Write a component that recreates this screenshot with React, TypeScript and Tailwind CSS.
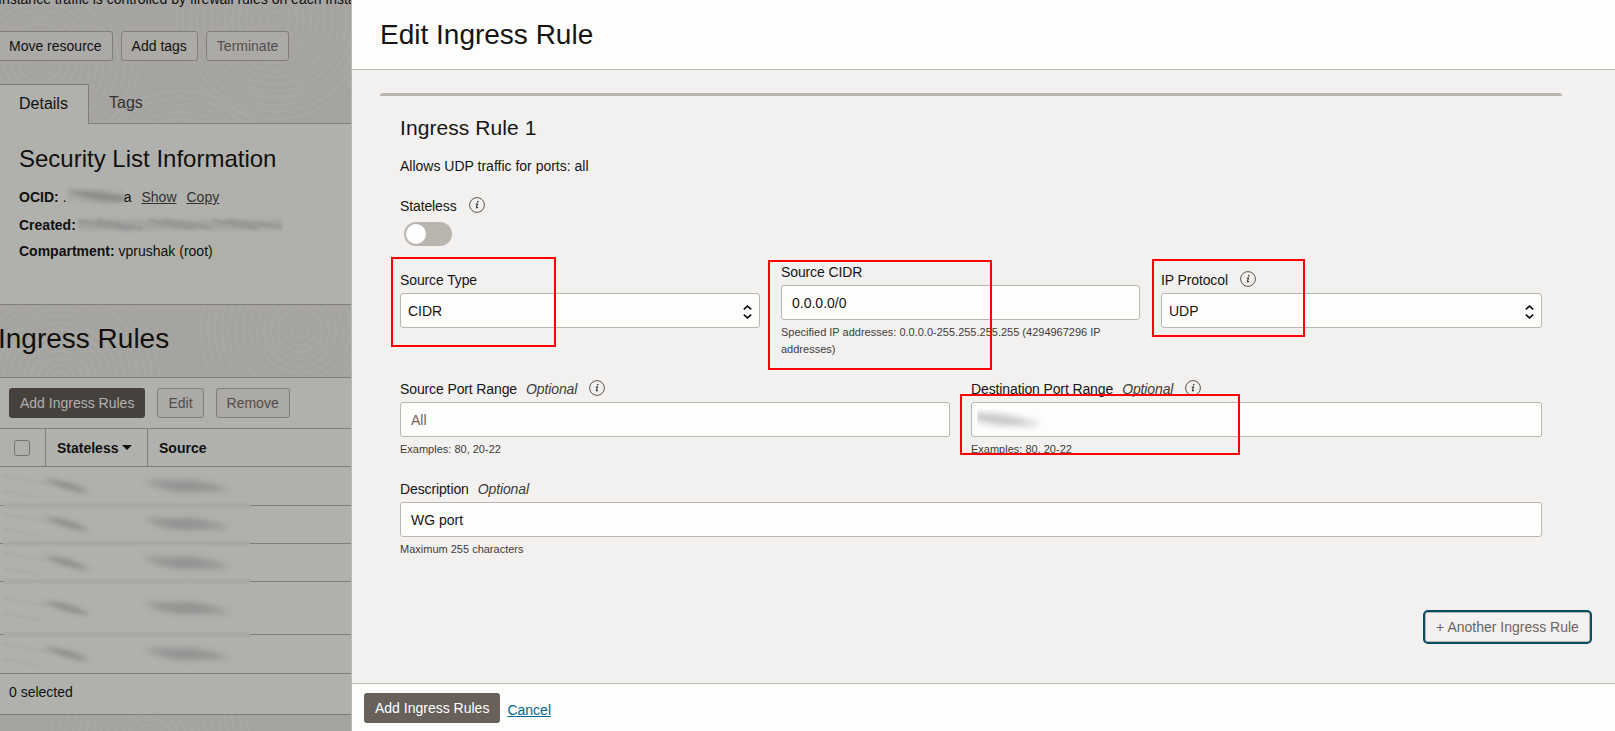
import React from "react";

const ROWS = [
  { height: "h-[39px]", smudge: "top-[-1px]" },
  { height: "h-[38px]", smudge: "top-[-2px]" },
  { height: "h-[38px]", smudge: "top-[-1px]" },
  { height: "h-[53px]", smudge: "top-[6px]" },
  { height: "h-[39px]", smudge: "top-[-1px]" },
];

function Rings() {
  const centers = [
    [40, 60],
    [180, 190],
    [275, 20],
    [300, 330],
    [60, 380],
    [150, 740],
  ];
  return (
    <svg className="absolute inset-0 h-full w-full" viewBox="0 0 351 731" fill="none" stroke="#acaba8">
      {centers.map(([cx, cy]) =>
        [8, 15, 22, 29, 36, 43, 50, 57, 64, 71, 78, 85, 92, 99].map((r) => (
          <circle key={`${cx}-${r}`} cx={cx} cy={cy} r={r} strokeWidth="2" opacity="0.5" />
        )),
      )}
    </svg>
  );
}

function InfoIcon({ className = "" }: { className?: string }) {
  return (
    <svg className={`h-4 w-4 shrink-0 ${className}`} viewBox="0 0 16 16" fill="none">
      <circle cx="8" cy="8" r="7.4" stroke="#4a4641" strokeWidth="0.9" />
      <circle cx="8.8" cy="4.7" r="0.8" fill="#161513" />
      <path d="M6.7 7.2L8.5 6.8L7.4 10.6C7.2 11.3 7.8 11.3 9 10.3" stroke="#161513" strokeWidth="1" />
    </svg>
  );
}

function UpDown() {
  return (
    <svg className="mt-[2px] h-[14px] w-[9px]" viewBox="0 0 9 14" fill="none" stroke="#161513" strokeWidth="1.7">
      <path d="M0.8 4.4L4.5 1.1L8.2 4.4M0.8 9.6L4.5 12.9L8.2 9.6" />
    </svg>
  );
}

function Field({ children, className = "" }: { children?: React.ReactNode; className?: string }) {
  return (
    <div
      className={`flex h-[35px] w-full items-center rounded-[3px] border border-[#bbb6b1] bg-[#fdfdfc] px-[10px] ${className}`}
    >
      {children}
    </div>
  );
}

function SelectField({ value }: { value: string }) {
  return (
    <Field className="justify-between pr-[7px] pl-[7px]">
      <span>{value}</span>
      <UpDown />
    </Field>
  );
}

function Label({ text, optional, info }: { text: string; optional?: boolean; info?: boolean }) {
  return (
    <div className="flex h-5 items-center tracking-[-0.12px] whitespace-nowrap">
      <span>{text}</span>
      {optional && <span className="ml-[9px] text-[#3f3b37] italic">Optional</span>}
      {info && <InfoIcon className="-mt-[3px] ml-[12px]" />}
    </div>
  );
}

function DarkRowSmudge({ className }: { className: string }) {
  return (
    <svg className={`absolute left-[3px] h-[39px] w-[247px] ${className}`} viewBox="0 0 247 39">
      <g fill="none" stroke="#a3a3a0" strokeWidth="2" opacity="0.6" style={{ filter: "blur(1px)" }}>
        <path d="M0 10L45 18M0 25L38 32" />
      </g>
      <path d="M40 13Q64 13 88 27Q64 26 40 13Z" fill="#8b8b89" style={{ filter: "blur(2.5px)" }} />
      <path d="M140 14Q160 16 184 14Q208 16 228 25Q204 24 184 26Q158 25 140 14Z" fill="#919190" style={{ filter: "blur(3px)" }} />
    </svg>
  );
}

function Sidebar() {
  const ghost = "h-[30px] rounded-[3px] border border-[#827d79] bg-[#acaaa7] px-[10px] whitespace-nowrap";
  return (
    <aside className="relative h-full w-[351px] shrink-0 overflow-hidden bg-[#a5a4a1] text-[#11100f]">
      <Rings />
      <div className="relative flex h-full flex-col">
        <div className="-mt-[11px] ml-[-2px] h-[42px] whitespace-nowrap leading-5">
          Instance traffic is controlled by firewall rules on each Instance
        </div>
        <div className="-ml-[2px] flex h-[53px] gap-2">
          <button className={ghost}>Move resource</button>
          <button className={ghost}>Add tags</button>
          <button className={`${ghost} text-[#514d4a]`}>Terminate</button>
        </div>
        <div className="flex h-10 shrink-0 text-base">
          <div className="h-10 w-[89px] border-t border-r border-[#827d79] bg-[#b0b0ad] pt-[7px] pl-[19px]">Details</div>
          <div className="flex-1 border-b border-[#827d79] pt-[7px] pl-5 text-[#34312e]">Tags</div>
        </div>
        <section className="h-[181px] shrink-0 border-b border-[#827d79] bg-[#b0b0ad] pl-[19px]">
          <h2 className="pt-[19px] text-[24px] leading-[32px]">Security List Information</h2>
          <div className="mt-[12px] flex h-5 leading-5">
            <b>OCID:</b>
            <span className="ml-1 w-[3px]">.</span>
            <svg className="h-5 w-[59px] shrink-0" viewBox="0 0 59 20">
              <rect y="2" width="59" height="14" fill="#a8a8a5" opacity="0.5" style={{ filter: "blur(2px)" }} />
              <path d="M0 4Q30 3 59 9L59 14Q40 16 24 12Q10 8 0 4Z" fill="#8c8c89" style={{ filter: "blur(2px)" }} />
              <path d="M2 10L42 17" stroke="#a0a09d" style={{ filter: "blur(.8px)" }} />
            </svg>
            <span className="-ml-px">a</span>
            <a className="ml-[10px] text-[#34312e] underline">Show</a>
            <a className="ml-[10px] text-[#34312e] underline">Copy</a>
          </div>
          <div className="mt-2 flex h-5 leading-5">
            <b>Created:</b>
            <svg className="ml-[1px] h-5 w-[206px]" viewBox="0 0 206 20">
              <path d="M0 4L206 5L206 15L0 15Z" fill="#a0a09d" opacity="0.8" style={{ filter: "blur(2px)" }} />
              <g stroke="#8f8f8f" strokeWidth="2.5" fill="none" opacity="0.8" style={{ filter: "blur(1.6px)" }}>
                <path d="M2 6Q26 10 54 15M20 5L66 14M72 5Q94 10 118 14M86 5L134 13M136 5L182 14M150 5L204 12" />
              </g>
            </svg>
          </div>
          <div className="mt-[6px] h-5 leading-5">
            <b>Compartment:</b> vprushak (root)
          </div>
        </section>
        <h1 className="-ml-[3px] h-[73px] shrink-0 border-b border-[#827d79] pt-[16px] pl-[1px] text-[28px] leading-9">
          Ingress Rules
        </h1>
        <section className="shrink-0 bg-[#b0b0ad]">
          <div className="flex h-[51px] gap-3 border-b border-[#827d79] pt-[10px] pl-[9px]">
            <button className="h-[30px] rounded-[3px] bg-[#47413e] px-[11px] whitespace-nowrap text-[#b0b0ad]">Add Ingress Rules</button>
            <button className={`${ghost} text-[#514d4a]`}>Edit</button>
            <button className={`${ghost} text-[#514d4a]`}>Remove</button>
          </div>
          <div className="flex h-[38px] items-center border-b border-[#827d79] font-bold">
            <div className="flex h-full w-[46px] items-center border-r border-[#827d79] pl-[14px]">
              <div className="h-4 w-4 rounded-[3px] border border-[#77726e]" />
            </div>
            <div className="flex h-full w-[102px] items-center border-r border-[#827d79] pl-[11px]">
              Stateless
              <svg className="ml-1 h-[5px] w-[10px]" viewBox="0 0 10 5">
                <path d="M0 0H10L5 5Z" fill="#11100f" />
              </svg>
            </div>
            <div className="pl-[11px]">Source</div>
          </div>
          {ROWS.map((row, i) => (
            <div key={i} className={`relative ${row.height} ${i === 4 ? "border-b border-[#827d79]" : ""}`}>
              <DarkRowSmudge className={row.smudge} />
              {i < 4 && (
                <div className="flex h-full items-end">
                  <div className="h-px w-[3px] bg-[#827d79]" />
                  <div className="-mb-[4px] h-[9px] w-[247px] bg-linear-to-b from-[#b0b0ad] via-[#a7a7a4] to-[#b0b0ad]" />
                  <div className="h-px flex-1 bg-[#827d79]" />
                </div>
              )}
            </div>
          ))}
          <div className="h-[41px] border-b border-[#827d79] pt-[8px] pl-[9px] leading-5">0 selected</div>
        </section>
      </div>
    </aside>
  );
}

function Highlight({ className }: { className: string }) {
  return <div className={`pointer-events-none absolute border-2 border-[#ff0000] ${className}`} />;
}

export default function App() {
  return (
    <div className="relative flex h-[731px] w-[1615px] overflow-hidden bg-[#f3f1f0] font-['Liberation_Sans',Arial,sans-serif] text-[14px] leading-5 text-[#161513]">
      <Sidebar />
      <main className="flex h-full flex-1 flex-col border-l border-[#b9b8b5]">
        <header className="h-[70px] shrink-0 border-b border-[#bbb8b5] bg-[#fdfdfc] pt-[17px] pl-7">
          <h1 className="text-[28px] leading-9">Edit Ingress Rule</h1>
        </header>
        <div className="flex-1 pt-[23px] pl-7">
          <div className="h-[3px] w-[1182px] rounded-t-[3px] bg-[#bbb5af]" />
          <div className="ml-5 w-[1142px]">
            <h2 className="mt-[18px] text-[21px] leading-7 tracking-[0.08px]">Ingress Rule 1</h2>
            <p className="mt-[14px]">Allows UDP traffic for ports: all</p>
            <div className="mt-5">
              <Label text="Stateless" info />
            </div>
            <div className="mt-[6px] ml-1 flex h-6 w-12 items-center rounded-full bg-[#bbb5af] px-[2px]">
              <div className="h-5 w-5 rounded-full bg-white" />
            </div>
            <div className="mt-4 flex h-[98px]">
              <div className="w-[360px] pt-2">
                <Label text="Source Type" />
                <div className="mt-[3px]">
                  <SelectField value="CIDR" />
                </div>
              </div>
              <div className="ml-[21px] w-[359px]">
                <Label text="Source CIDR" />
                <Field className="mt-[3px]">0.0.0.0/0</Field>
                <p className="mt-[4px] text-[11px] leading-[17px] text-[#3f3b37]">
                  Specified IP addresses: 0.0.0.0-255.255.255.255 (4294967296 IP addresses)
                </p>
              </div>
              <div className="ml-[21px] w-[381px] pt-2">
                <Label text="IP Protocol" info />
                <div className="mt-[3px]">
                  <SelectField value="UDP" />
                </div>
              </div>
            </div>
            <div className="mt-[19px] flex h-[100px] gap-[21px]">
              <div className="w-[550px]">
                <Label text="Source Port Range" optional info />
                <Field className="mt-[3px] text-[#6b6560]">All</Field>
                <p className="mt-[4px] text-[11px] leading-[17px] text-[#3f3b37]">Examples: 80, 20-22</p>
              </div>
              <div className="w-[571px]">
                <Label text="Destination Port Range" optional info />
                <Field className="mt-[3px] pl-[5px]">
                  <svg className="h-[22px] w-[68px]" viewBox="0 0 68 22">
                    <path d="M0 2Q34 1 64 13L58 19Q26 20 0 15Z" fill="#e8e7e6" style={{ filter: "blur(2px)" }} />
                    <path d="M0 5Q30 6 52 14Q26 18 0 10Z" fill="#cbcacb" style={{ filter: "blur(2.2px)" }} />
                  </svg>
                </Field>
                <p className="mt-[4px] text-[11px] leading-[17px] text-[#3f3b37]">Examples: 80, 20-22</p>
              </div>
            </div>
            <Label text="Description" optional />
            <Field className="mt-[3px]">WG port</Field>
            <p className="mt-[4px] text-[11px] leading-[17px] text-[#3f3b37]">Maximum 255 characters</p>
          </div>
          <div className="mt-[52px] flex justify-end pr-[23px]">
            <button className="h-[34px] w-[169px] rounded-[5px] border-2 border-[#0b4c63] text-[#6b6560] inset-ring inset-ring-[#bbb5af]">
              + Another Ingress Rule
            </button>
          </div>
        </div>
        <footer className="flex h-12 shrink-0 border-t border-[#bbb8b5] bg-[#fdfdfc] pt-[9px] pl-3">
          <button className="h-[30px] rounded-[3px] bg-[#67605b] px-[11px] text-white">Add Ingress Rules</button>
          <a className="mt-[7px] ml-[7px] text-[#00688c] underline">Cancel</a>
        </footer>
      </main>
      <Highlight className="top-[257px] left-[391px] h-[90px] w-[165px]" />
      <Highlight className="top-[260px] left-[768px] h-[110px] w-[224px]" />
      <Highlight className="top-[259px] left-[1152px] h-[78px] w-[153px]" />
      <Highlight className="top-[394px] left-[960px] h-[61px] w-[280px]" />
    </div>
  );
}
